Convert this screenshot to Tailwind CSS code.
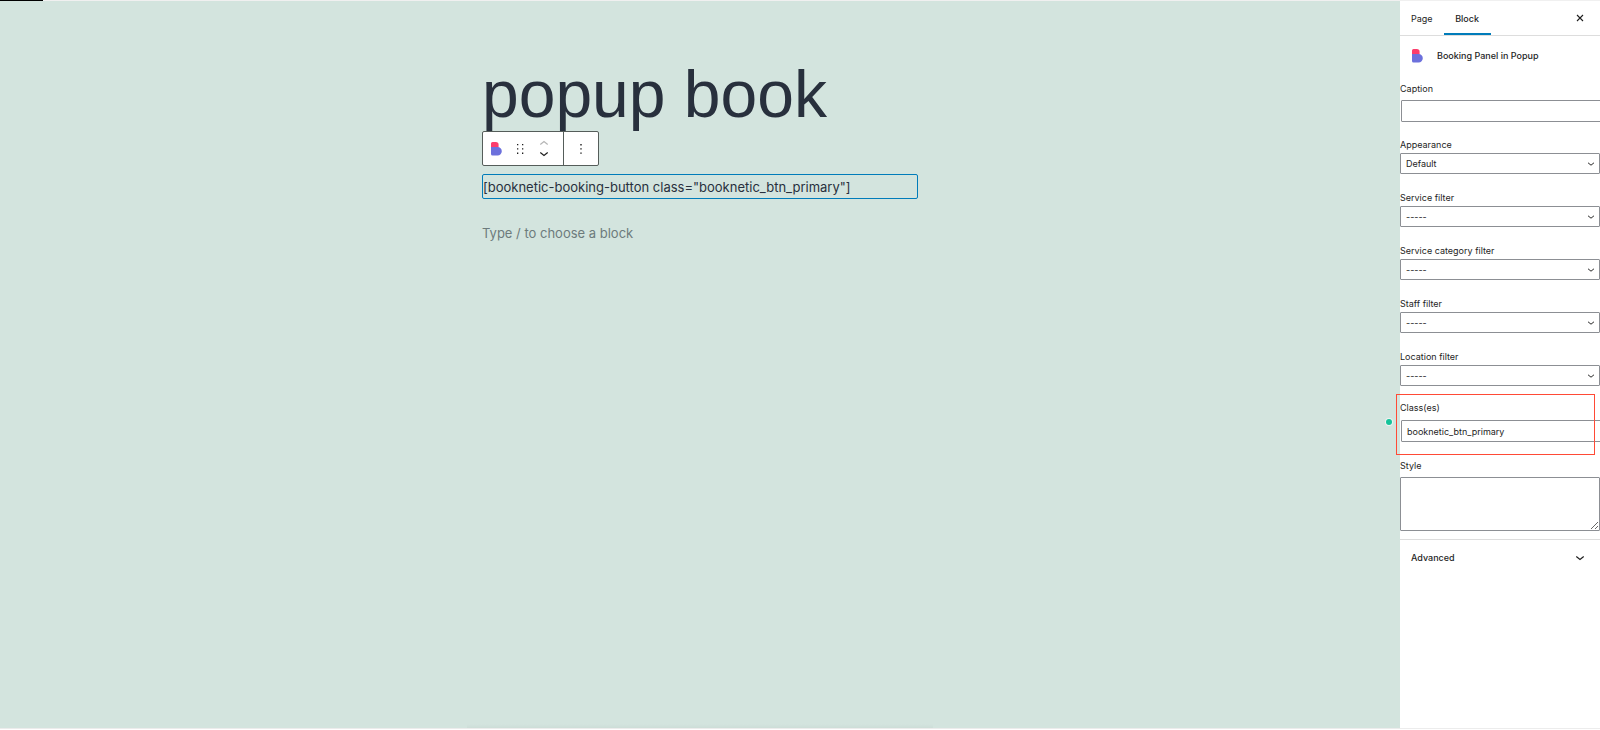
<!DOCTYPE html>
<html lang="en">
<head>
    <meta charset="UTF-8">
    <meta name="viewport" content="width=device-width, initial-scale=1.0">
    <title>popup book</title>
    <script src="https://cdn.jsdelivr.net/npm/@tailwindcss/browser@4"></script>
</head>
<body class="bg-white font-[Inter,sans-serif] text-[#1e1e1e]">
    <svg class="hidden">
        <symbol id="logo" viewBox="0 0 11 14">
            <path fill="#fb3d6c" d="M0 1.500Q0 0 1.500 0h3.300a2.800 2.800 0 0 1 2.800 2.800v2.600H0z"/>
            <path fill="#6c70dc" d="M0 5h6.600a4.200 4.200 0 0 1 0 8.400H1.500Q0 13.400 0 11.900z"/>
        </symbol>
        <symbol id="chevron" viewBox="0 0 10 6">
            <path d="M1.300 1.500 5 4.500l3.700-3" fill="none" stroke="currentColor" stroke-width="1.200"/>
        </symbol>
    </svg>

    <div class="min-h-screen flex flex-col">
        <div class="h-px bg-[#f0f0f0]"><div class="h-px w-[43px] bg-black"></div></div>

        <div class="flex-1 flex border-b border-[#ececec] mb-px">
            <!-- canvas -->
            <main class="relative flex-1 min-w-0 bg-[#d3e4de] pt-[58px]">
                <div class="w-[436px] mx-auto">
                    <h1 class="font-['Liberation_Sans',sans-serif] text-[66px] leading-[70px] text-[#28303d] whitespace-nowrap">popup book</h1>

                    <div class="mt-[2px] inline-flex h-[35px] bg-white border border-[#555d5a] rounded-xs">
                        <div class="flex items-center pl-[8px] pr-[14px] gap-[14px] border-r border-[#555d5a]">
                            <button aria-label="Booking Panel in Popup"><svg class="w-[11px] h-[14px]"><use href="#logo"/></svg></button>
                            <button aria-label="Drag">
                                <svg class="w-[9px] h-[12px]" viewBox="0 0 9 12" fill="#1e1e1e">
                                    <path d="M1 1h1.300v1.300H1zM6 1h1.300v1.300H6zM1 5.300h1.300v1.300H1zM6 5.300h1.300v1.300H6zM1 9.600h1.300v1.300H1zM6 9.600h1.300v1.300H6z"/>
                                </svg>
                            </button>
                            <div class="flex flex-col gap-[5px]">
                                <button class="text-[#b5b5b5]" aria-label="Move up"><svg class="w-[10px] h-[6px] rotate-180"><use href="#chevron"/></svg></button>
                                <button aria-label="Move down"><svg class="w-[10px] h-[6px]"><use href="#chevron"/></svg></button>
                            </div>
                        </div>
                        <button class="w-[34px] flex items-center justify-center" aria-label="Options">
                            <svg class="w-[4px] h-[12px]" viewBox="0 0 4 12" fill="#1e1e1e">
                                <path d="M1.300 1h1.400v1.400H1.300zM1.300 5.200h1.400v1.400H1.300zM1.300 9.400h1.400v1.400H1.300z"/>
                            </svg>
                        </button>
                    </div>

                    <div class="mt-[8px] h-[25px] flex items-center border border-[#007cba] rounded-xs text-[13px] leading-[20px] text-[#28303d] whitespace-nowrap">[booknetic-booking-button class="booknetic_btn_primary"]</div>
                    <p class="mt-[24px] text-[13px] leading-[20px] text-[#6d7b7c]">Type / to choose a block</p>
                </div>
                <span class="absolute right-[8px] top-[418px] size-[6px] rounded-full bg-[#15c39a] ring-1 ring-white/60"></span>
                <div class="absolute bottom-0 inset-x-1/3 h-[4px] bg-linear-to-t from-black/3 to-transparent"></div>
            </main>

            <!-- settings -->
            <aside class="w-[200px] shrink-0 text-[9px] leading-[12px] overflow-hidden">
                <div class="h-[35px] flex items-stretch border-b border-[#ddd]">
                    <button class="px-[11px] pt-px">Page</button>
                    <button class="w-[47px] pt-px font-medium border-b-2 border-t-2 border-t-transparent border-[#007cba]">Block</button>
                    <button class="ml-auto mr-[15px]" aria-label="Close">
                        <svg class="w-[10px] h-[10px]" viewBox="0 0 10 10"><path d="m2 2 6 6M8 2 2 8" stroke="#1e1e1e" stroke-width="1.100"/></svg>
                    </button>
                </div>

                <div class="h-[40px] flex items-center pl-[12px] gap-[14px]">
                    <svg class="w-[11px] h-[14px]"><use href="#logo"/></svg>
                    <h2 class="font-medium">Booking Panel in Popup</h2>
                </div>

                <div class="pt-[7px]">
                    <label class="block" for="caption">Caption</label>
                    <input id="caption" type="text" class="block mt-[5px] ml-px w-full h-[22px] px-[5px] border border-[#8c8f94] rounded-[1px]">
                </div>

                <div class="mt-[17px] grid gap-[18px]">
                    <div>
                        <label class="block" for="appearance">Appearance</label>
                        <div class="relative mt-[2px]">
                            <select id="appearance" class="block appearance-none w-full h-[21px] px-[5px] border border-[#8c8f94] rounded-[1px]"><option>Default</option></select>
                            <svg class="absolute right-[5px] top-[8px] w-[8px] h-[6px] pointer-events-none"><use href="#chevron"/></svg>
                        </div>
                    </div>
                    <div>
                        <label class="block" for="service">Service filter</label>
                        <div class="relative mt-[2px]">
                            <select id="service" class="block appearance-none w-full h-[21px] px-[5px] border border-[#8c8f94] rounded-[1px]"><option>-----</option></select>
                            <svg class="absolute right-[5px] top-[8px] w-[8px] h-[6px] pointer-events-none"><use href="#chevron"/></svg>
                        </div>
                    </div>
                    <div>
                        <label class="block" for="category">Service category filter</label>
                        <div class="relative mt-[2px]">
                            <select id="category" class="block appearance-none w-full h-[21px] px-[5px] border border-[#8c8f94] rounded-[1px]"><option>-----</option></select>
                            <svg class="absolute right-[5px] top-[8px] w-[8px] h-[6px] pointer-events-none"><use href="#chevron"/></svg>
                        </div>
                    </div>
                    <div>
                        <label class="block" for="staff">Staff filter</label>
                        <div class="relative mt-[2px]">
                            <select id="staff" class="block appearance-none w-full h-[21px] px-[5px] border border-[#8c8f94] rounded-[1px]"><option>-----</option></select>
                            <svg class="absolute right-[5px] top-[8px] w-[8px] h-[6px] pointer-events-none"><use href="#chevron"/></svg>
                        </div>
                    </div>
                    <div>
                        <label class="block" for="location">Location filter</label>
                        <div class="relative mt-[2px]">
                            <select id="location" class="block appearance-none w-full h-[21px] px-[5px] border border-[#8c8f94] rounded-[1px]"><option>-----</option></select>
                            <svg class="absolute right-[5px] top-[8px] w-[8px] h-[6px] pointer-events-none"><use href="#chevron"/></svg>
                        </div>
                    </div>
                </div>

                <div class="mt-[16px]">
                    <label class="block" for="classes">Class(es)</label>
                    <input id="classes" type="text" value="booknetic_btn_primary" class="block mt-[6px] ml-px w-full h-[22px] px-[5px] border border-[#8c8f94] rounded-[1px]">
                </div>

                <div class="mt-[18px] pb-[8px] border-b border-[#ddd]">
                    <label class="block" for="style">Style</label>
                    <textarea id="style" class="block mt-[5px] w-full h-[54px] border border-[#8c8f94] rounded-[1px]"></textarea>
                </div>

                <button class="w-full h-[36px] flex items-center justify-between pl-[11px] pr-[15px] font-medium">
                    Advanced
                    <svg class="w-[10px] h-[6px]"><use href="#chevron"/></svg>
                </button>
            </aside>
        </div>
    </div>

    <!-- highlight round the class field -->
    <div class="absolute right-[5px] top-[394px] w-[199px] h-[61px] border border-[#ff4a36] pointer-events-none"></div>
</body>
</html>
